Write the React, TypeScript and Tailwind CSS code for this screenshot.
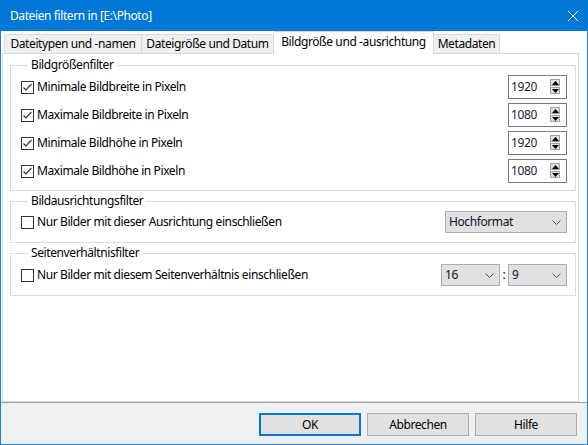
import React from "react";

const font = { fontFamily: '"Noto Sans", "Open Sans", sans-serif' };

const Check = ({ checked }: { checked?: boolean }) => (
    <span className="w-[13px] h-[13px] border border-[#333333] bg-white flex items-center justify-center shrink-0">
        {checked && (
            <svg width="11" height="11" viewBox="0 0 11 11">
                <path d="M1.5 5.5 L4 8 L9.5 2" fill="none" stroke="#333333" strokeWidth="1.2" />
            </svg>
        )}
    </span>
);

const Chevron = () => (
    <svg width="9" height="5" viewBox="0 0 9 5" className="shrink-0">
        <path d="M0.5 0.5 L4.5 4.5 L8.5 0.5" fill="none" stroke="#555555" strokeWidth="1" />
    </svg>
);

const Spinner = ({ value }: { value: string }) => (
    <div className="w-[59px] h-[24px] border border-[#7a7a7a] bg-white flex items-start">
        <span className="flex-1 pl-[2px] pt-[3px] text-[12px] leading-[16px] text-[#1a1a40]">{value}</span>
        <div className="flex flex-col gap-[1px] pt-[3px] pr-[6px]">
            <span className="w-[10px] h-[7px] bg-[#e1e1e1] border border-[#a0a0a0] flex items-center justify-center">
                <svg width="7" height="4" viewBox="0 0 7 4">
                    <path d="M0 4 L3.5 0 L7 4 Z" fill="#000" />
                </svg>
            </span>
            <span className="w-[10px] h-[7px] bg-[#e1e1e1] border border-[#a0a0a0] flex items-center justify-center">
                <svg width="7" height="4" viewBox="0 0 7 4">
                    <path d="M0 0 L3.5 4 L7 0 Z" fill="#000" />
                </svg>
            </span>
        </div>
    </div>
);

const Select = ({ value, width }: { value: string; width: string }) => (
    <div className={`${width} h-[22px] bg-[#e1e1e1] border border-[#adadad] flex items-center pl-[3px] pr-[5px]`}>
        <span className="flex-1 text-[12px] leading-[16px] text-[#1a0d2e]">{value}</span>
        <Chevron />
    </div>
);

const Group = ({ title, children, className }: { title: string; children: React.ReactNode; className: string }) => (
    <fieldset className={`border border-[#dcdcdc] pl-[10px] pr-[8px] ${className}`}>
        <legend className="ml-[7px] px-[3px] text-[12px] leading-[16px] text-black">{title}</legend>
        {children}
    </fieldset>
);

const sizeRows = [
    { label: "Minimale Bildbreite in Pixeln", value: "1920" },
    { label: "Maximale Bildbreite in Pixeln", value: "1080" },
    { label: "Minimale Bildhöhe in Pixeln", value: "1920" },
    { label: "Maximale Bildhöhe in Pixeln", value: "1080" },
];

const tabs = [
    { label: "Dateitypen und -namen", w: "w-[138px] border-l" },
    { label: "Dateigröße und Datum", w: "w-[132px]" },
    { label: "Bildgröße und -ausrichtung", w: "w-[160px]", active: true },
    { label: "Metadaten", w: "w-[66px]" },
];

export default function App() {
    return (
        <div
            className="w-[588px] h-[445px] flex flex-col border-x border-b border-[#1a80d5] bg-white text-black tracking-[-0.4px] select-none"
            style={font}
        >
            {/* Title bar */}
            <div className="h-[31px] shrink-0 bg-[#0078d7] -mx-px flex items-center justify-between pl-[10px] pr-[10px]">
                <span className="text-white text-[12px] leading-[16px]">Dateien filtern in [E:\Photo]</span>
                <svg width="10" height="10" viewBox="0 0 10 10">
                    <path d="M0 0 L10 10 M10 0 L0 10" stroke="#fff" strokeWidth="1" />
                </svg>
            </div>

            {/* Tab control */}
            <div className="h-[371px] flex flex-col pl-[1px] pr-[8px]">
                <div className="h-[22px] flex items-end pl-[2px] relative z-10">
                    {tabs.map((t) =>
                        t.active ? (
                            <div
                                key={t.label}
                                className={`${t.w} h-[23px] -mb-px bg-white border-t border-r border-[#d9d9d9] flex items-center justify-center text-[12px] leading-[16px] pb-[2px]`}
                            >
                                {t.label}
                            </div>
                        ) : (
                            <div
                                key={t.label}
                                className={`${t.w} h-[19px] bg-[#f0f0f0] border-t border-r border-[#d9d9d9] flex items-center justify-center text-[12px] leading-[16px]`}
                            >
                                {t.label}
                            </div>
                        )
                    )}
                </div>
                <div className="flex-1 border border-[#d9d9d9] bg-white pl-[7px] pr-[2px] pt-[3px] flex flex-col gap-[2px]">
                    <Group title="Bildgrößenfilter" className="pt-[2px] pb-[7px]">
                        <div className="flex flex-col gap-[4px]">
                            {sizeRows.map((r) => (
                                <div key={r.label} className="h-[24px] flex items-center">
                                    <Check checked />
                                    <span className="ml-[3px] flex-1 text-[12px] leading-[16px]">{r.label}</span>
                                    <Spinner value={r.value} />
                                </div>
                            ))}
                        </div>
                    </Group>

                    <Group title="Bildausrichtungsfilter" className="pt-[2px] pb-[9px]">
                        <div className="h-[22px] flex items-center">
                            <Check />
                            <span className="ml-[3px] flex-1 text-[12px] leading-[16px]">Nur Bilder mit dieser Ausrichtung einschließen</span>
                            <Select value="Hochformat" width="w-[122px]" />
                        </div>
                    </Group>

                    <Group title="Seitenverhältnisfilter" className="pt-[3px] pb-[9px]">
                        <div className="h-[22px] flex items-center">
                            <Check />
                            <span className="ml-[3px] flex-1 text-[12px] leading-[16px]">Nur Bilder mit diesem Seitenverhältnis einschließen</span>
                            <Select value="16" width="w-[59px]" />
                            <span className="w-[8px] text-center text-[12px] leading-[16px]">:</span>
                            <Select value="9" width="w-[59px]" />
                        </div>
                    </Group>
                </div>
            </div>

            {/* Footer */}
            <div className="flex-1 bg-[#f0f0f0] border-t border-[#a0a0a0] flex justify-end items-start gap-[6px] pt-[10px] pr-[10px]">
                <button className="w-[102px] h-[23px] bg-[#e1e1e1] border-2 border-[#0078d7] text-[12px] leading-[16px]">OK</button>
                <button className="w-[102px] h-[23px] bg-[#e1e1e1] border border-[#adadad] text-[12px] leading-[16px]">Abbrechen</button>
                <button className="w-[102px] h-[23px] bg-[#e1e1e1] border border-[#adadad] text-[12px] leading-[16px]">Hilfe</button>
            </div>
        </div>
    );
}
